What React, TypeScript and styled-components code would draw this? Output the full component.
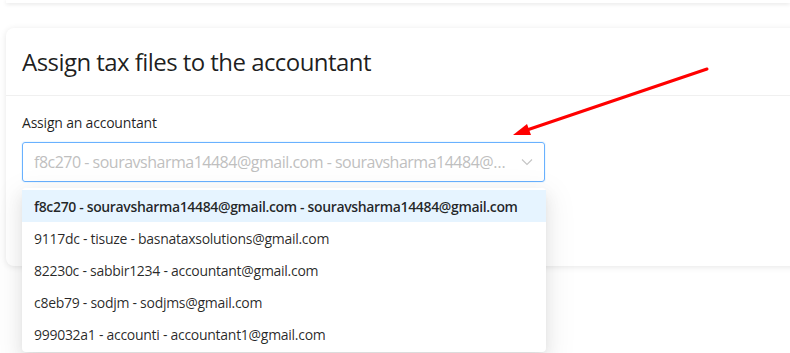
import React from "react";
import styled, { createGlobalStyle } from "styled-components";

const Global = createGlobalStyle`
    body {
        margin: 0;
        background: #ffffff;
        font-family: "Open Sans", "Noto Sans", sans-serif;
        color: rgba(0, 0, 0, 0.88);
        overflow: hidden;
    }
`

const Page = styled.div`
    position: relative;
    width: 790px;
    height: 353px;
    overflow: hidden;
`
const TopCard = styled.div`
    height: 3px;
    margin-left: 6px;
    background: #ffffff;
    box-shadow: 0 1px 4px rgba(0, 0, 0, 0.12);
`
const Card = styled.section`
    margin: 25px 0 0 6px;
    width: 820px;
    background: #ffffff;
    border-radius: 8px 0 0 8px;
    box-shadow: 0 1px 6px rgba(0, 0, 0, 0.1);
`
const CardHead = styled.div`
    height: 67px;
    display: flex;
    align-items: center;
    padding: 0 16px;
    border-bottom: 1px solid #f0f0f0;
`
const Title = styled.h2`
    margin: 0;
    font-size: 24px;
    font-weight: 400;
    letter-spacing: -0.55px;
    color: rgba(0, 0, 0, 0.88);
`
const CardBody = styled.div`
    padding: 16px 16px 84px;
`
const Label = styled.div`
    font-size: 14px;
    line-height: 22px;
    letter-spacing: -0.2px;
    margin-bottom: 8px;
`
const SelectWrap = styled.div`
    position: relative;
    width: 523px;
`
const SelectBox = styled.div`
    height: 38px;
    display: flex;
    align-items: center;
    padding: 0 11px;
    border: 1px solid #69b1ff;
    border-radius: 3px;
    box-shadow: 0 0 0 1px rgba(5, 145, 255, 0.06);
`
const Placeholder = styled.span`
    flex: 1;
    font-size: 16px;
    color: #bfbfbf;
    white-space: nowrap;
    overflow: hidden;
    text-overflow: ellipsis;
    letter-spacing: -0.5px;
`
const Chevron = styled.span`
    display: flex;
    margin-left: 12px;
    color: #c4c4c4;
`
const Dropdown = styled.ul`
    position: absolute;
    top: 46px;
    left: 0;
    width: 524px;
    margin: 0;
    padding: 2px 0;
    list-style: none;
    background: #ffffff;
    border-radius: 4px;
    box-shadow: 0 6px 16px rgba(0, 0, 0, 0.08), 0 3px 6px -4px rgba(0, 0, 0, 0.12), 0 9px 28px 8px rgba(0, 0, 0, 0.05);
`
const Option = styled.li<{ $active?: boolean }>`
    height: 32px;
    display: flex;
    align-items: center;
    padding: 0 12px;
    font-size: 14px;
    letter-spacing: ${(p) => (p.$active ? "-0.35px" : "-0.28px")};
    white-space: nowrap;
    font-weight: ${(p) => (p.$active ? 600 : 400)};
    background: ${(p) => (p.$active ? "#e6f4ff" : "transparent")};
    color: rgba(0, 0, 0, 0.85);
`
const ArrowLayer = styled.svg`
    position: absolute;
    left: 0;
    top: 0;
    pointer-events: none;
`

const options = [
    "f8c270 - souravsharma14484@gmail.com - souravsharma14484@gmail.com",
    "9117dc - tisuze - basnataxsolutions@gmail.com",
    "82230c - sabbir1234 - accountant@gmail.com",
    "c8eb79 - sodjm - sodjms@gmail.com",
    "999032a1 - accounti - accountant1@gmail.com",
]

const App: React.FC = () => {
    return (
        <Page>
            <Global />
            <TopCard />
            <Card>
                <CardHead>
                    <Title>Assign tax files to the accountant</Title>
                </CardHead>
                <CardBody>
                    <Label>Assign an accountant</Label>
                    <SelectWrap>
                        <SelectBox>
                            <Placeholder>{options[0]}</Placeholder>
                            <Chevron>
                                <svg width="12" height="12" viewBox="0 0 12 12" fill="none" stroke="currentColor" strokeWidth="1.1">
                                    <path d="M1 3.5 L6 8.5 L11 3.5" />
                                </svg>
                            </Chevron>
                        </SelectBox>
                        <Dropdown>
                            {options.map((o, i) => (
                                <Option key={o} $active={i === 0}>{o}</Option>
                            ))}
                        </Dropdown>
                    </SelectWrap>
                </CardBody>
            </Card>
            <ArrowLayer width="790" height="353">
                <line x1="707" y1="69" x2="524" y2="131" stroke="#ff0000" strokeWidth="3" strokeLinecap="round" />
                <polygon points="513,135 527,124 531,135" fill="#ff0000" />
            </ArrowLayer>
        </Page>
    )
}

export default App
